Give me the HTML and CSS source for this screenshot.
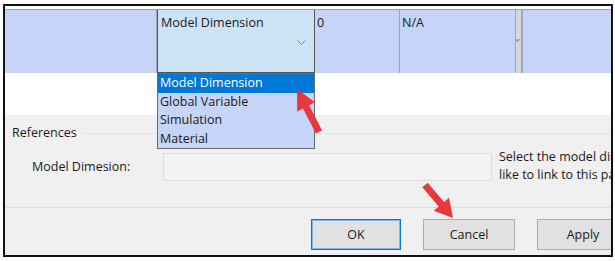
FILE: index.html
```html
<!DOCTYPE html>
<html lang="en">
<head>
  <meta charset="UTF-8">
  <title>Parameter References</title>
  <link rel="stylesheet" href="styles.css">
</head>
<body>

  <div class="frame">
    <div class="grid-head"></div>
    <div class="grid-row">
      <div class="cell"></div>
      <div class="cell combo">
        <span>Model Dimension</span>
        <svg class="chevron" width="9" height="6" viewBox="0 0 9 6"><path d="M0.5 0.5 L4.5 4.5 L8.5 0.5" fill="none" stroke="#8a8a8a" stroke-width="1"/></svg>
      </div>
      <div class="cell">0</div>
      <div class="cell na">
        <span>N/A</span>
        <div class="drop-edge">
          <svg width="5" height="5" viewBox="0 0 5 5"><path d="M0.5 1 L2.5 3.5 L4.5 1" fill="none" stroke="#777" stroke-width="1"/></svg>
        </div>
      </div>
      <div class="cell"></div>
    </div>
    <div class="blank"></div>

    <div class="refs">
      <div class="refs-title">References</div>
      <div class="refs-body">
        <label for="model-dim">Model Dimesion:</label>
        <div class="field" id="model-dim"></div>
        <p class="hint">Select the model dimension you would<br>like to link to this parameter.</p>
      </div>
    </div>

    <div class="buttons">
      <button class="btn default">OK</button>
      <button class="btn">Cancel</button>
      <button class="btn">Apply</button>
    </div>

    <ul class="drop-list">
      <li class="selected">Model Dimension</li>
      <li>Global Variable</li>
      <li>Simulation</li>
      <li>Material</li>
    </ul>

    <svg class="arrows" width="615" height="261" viewBox="0 0 615 261">
      <polygon points="297,89 315,102.3 309.2,105.2 322.1,130.4 315.9,133.6 303,108.4 297.2,111.4" fill="#e8383d"/>
      <polygon points="453,218 433.8,210.8 438.7,206.6 422.3,187.3 427.7,182.7 444.1,202 449,197.8" fill="#e8383d"/>
    </svg>
  </div>

</body>
</html>
```

FILE: styles.css
```css
body {
  font-family: "Open Sans", "Noto Sans", sans-serif;
  font-size: 12.5px;
  margin: 0;
  padding: 0;
  background-color: #fff;
  color: #1a1a1a;
}

.frame {
  position: relative;
  width: 606px;
  height: 249px;
  margin: 4px 0 0 3px;
  border: 2px solid #111;
  background-color: #f0f0f0;
  overflow: hidden;
}

.grid-head {
  height: 3px;
  background-color: #fff;
  border-bottom: 1px solid #a0a0a0;
}

.grid-row {
  display: grid;
  grid-template-columns: 152px 158px 85px 123px 1fr;
  height: 63px;
  background-color: #c6d4f7;
}

.cell {
  position: relative;
  padding: 4px 2px;
  line-height: 17px;
  border-right: 1px solid #9aa6c4;
}

.cell:last-child {
  border-right: none;
}

.combo {
  background-color: #cce3f6;
  border-left: 1px solid #555;
  border-right: 1px solid #555;
  border-bottom: 1px solid #555;
  padding-left: 3px;
}

.chevron {
  position: absolute;
  right: 8px;
  top: 30px;
}

.na {
  padding-right: 8px;
}

.drop-edge {
  position: absolute;
  right: 0;
  top: 0;
  bottom: 0;
  width: 5px;
  background-color: #d8d8d8;
  border-left: 1px solid #a8a8a8;
  border-right: 1px solid #a8a8a8;
}

.drop-edge svg {
  position: absolute;
  left: -1px;
  top: 28px;
}

.blank {
  height: 42px;
  background-color: #fff;
}

.refs {
  padding: 10px 0 23px 7px;
  border-bottom: 1px solid #dedede;
}

.refs-title {
  display: flex;
  align-items: center;
  gap: 6px;
  line-height: 16px;
}

.refs-title::after {
  content: "";
  flex: 1;
  height: 1px;
  background-color: #e2e2e2;
}

.refs-body {
  display: flex;
  align-items: flex-start;
  margin-top: 12px;
  padding-left: 20px;
}

.refs-body label {
  flex: none;
  width: 131px;
  line-height: 28px;
}

.field {
  flex: none;
  width: 327px;
  height: 26px;
  background-color: #f3f3f3;
  border: 1px solid #dcdcdc;
  margin-right: 7px;
}

.hint {
  flex: none;
  margin: -5px 0 0 0;
  line-height: 18px;
  white-space: nowrap;
}

.buttons {
  display: flex;
  gap: 22px;
  padding: 11px 0 0 306px;
}

.btn {
  flex: none;
  width: 92px;
  height: 31px;
  font-family: inherit;
  font-size: 12.5px;
  color: #1a1a1a;
  background-color: #e1e1e1;
  border: 1px solid #adadad;
}

.btn.default {
  width: 90px;
  border: 1px solid #0078d7;
  box-shadow: inset 0 0 0 1px #7fb6e6;
}

.drop-list {
  position: absolute;
  left: 152px;
  top: 67px;
  width: 156px;
  margin: 0;
  padding: 0;
  list-style: none;
  background-color: #c6d4f7;
  border: 1px solid #6a6a6a;
}

.drop-list li {
  height: 18.5px;
  line-height: 18px;
  padding-left: 2px;
}

.drop-list li.selected {
  background-color: #0078d7;
  color: #fff;
}

.arrows {
  position: absolute;
  left: -5px;
  top: -6px;
}
```
